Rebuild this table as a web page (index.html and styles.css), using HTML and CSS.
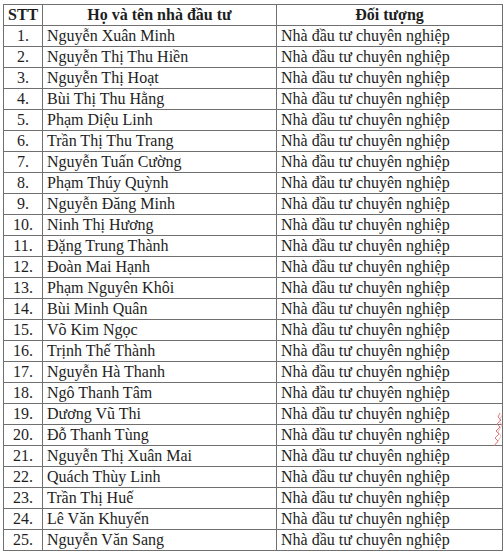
FILE: index.html
```html
<!DOCTYPE html>
<html lang="vi">
<head>
<meta charset="utf-8">
<link rel="stylesheet" href="styles.css">
</head>
<body>
<div class="page">
<table class="list">
<colgroup><col class="c-stt"><col class="c-name"><col class="c-type"></colgroup>
<thead>
<tr><th>STT</th><th>Họ và tên nhà đầu tư</th><th>Đối tượng</th></tr>
</thead>
<tbody>
<tr><td class="stt">1.</td><td>Nguyễn Xuân Minh</td><td>Nhà đầu tư chuyên nghiệp</td></tr>
<tr><td class="stt">2.</td><td>Nguyễn Thị Thu Hiền</td><td>Nhà đầu tư chuyên nghiệp</td></tr>
<tr><td class="stt">3.</td><td>Nguyễn Thị Hoạt</td><td>Nhà đầu tư chuyên nghiệp</td></tr>
<tr><td class="stt">4.</td><td>Bùi Thị Thu Hằng</td><td>Nhà đầu tư chuyên nghiệp</td></tr>
<tr><td class="stt">5.</td><td>Phạm Diệu Linh</td><td>Nhà đầu tư chuyên nghiệp</td></tr>
<tr><td class="stt">6.</td><td>Trần Thị Thu Trang</td><td>Nhà đầu tư chuyên nghiệp</td></tr>
<tr><td class="stt">7.</td><td>Nguyễn Tuấn Cường</td><td>Nhà đầu tư chuyên nghiệp</td></tr>
<tr><td class="stt">8.</td><td>Phạm Thúy Quỳnh</td><td>Nhà đầu tư chuyên nghiệp</td></tr>
<tr><td class="stt">9.</td><td>Nguyễn Đăng Minh</td><td>Nhà đầu tư chuyên nghiệp</td></tr>
<tr><td class="stt">10.</td><td>Ninh Thị Hương</td><td>Nhà đầu tư chuyên nghiệp</td></tr>
<tr><td class="stt">11.</td><td>Đặng Trung Thành</td><td>Nhà đầu tư chuyên nghiệp</td></tr>
<tr><td class="stt">12.</td><td>Đoàn Mai Hạnh</td><td>Nhà đầu tư chuyên nghiệp</td></tr>
<tr><td class="stt">13.</td><td>Phạm Nguyên Khôi</td><td>Nhà đầu tư chuyên nghiệp</td></tr>
<tr><td class="stt">14.</td><td>Bùi Minh Quân</td><td>Nhà đầu tư chuyên nghiệp</td></tr>
<tr><td class="stt">15.</td><td>Võ Kim Ngọc</td><td>Nhà đầu tư chuyên nghiệp</td></tr>
<tr><td class="stt">16.</td><td>Trịnh Thế Thành</td><td>Nhà đầu tư chuyên nghiệp</td></tr>
<tr><td class="stt">17.</td><td>Nguyễn Hà Thanh</td><td>Nhà đầu tư chuyên nghiệp</td></tr>
<tr><td class="stt">18.</td><td>Ngô Thanh Tâm</td><td>Nhà đầu tư chuyên nghiệp</td></tr>
<tr><td class="stt">19.</td><td>Dương Vũ Thi</td><td>Nhà đầu tư chuyên nghiệp</td></tr>
<tr><td class="stt">20.</td><td>Đỗ Thanh Tùng</td><td>Nhà đầu tư chuyên nghiệp</td></tr>
<tr><td class="stt">21.</td><td>Nguyễn Thị Xuân Mai</td><td>Nhà đầu tư chuyên nghiệp</td></tr>
<tr><td class="stt">22.</td><td>Quách Thùy Linh</td><td>Nhà đầu tư chuyên nghiệp</td></tr>
<tr><td class="stt">23.</td><td>Trần Thị Huế</td><td>Nhà đầu tư chuyên nghiệp</td></tr>
<tr><td class="stt">24.</td><td>Lê Văn Khuyến</td><td>Nhà đầu tư chuyên nghiệp</td></tr>
<tr><td class="stt">25.</td><td>Nguyễn Văn Sang</td><td>Nhà đầu tư chuyên nghiệp</td></tr>
</tbody>
</table>
<svg class="stamp" width="10" height="36" viewBox="0 0 10 36" aria-hidden="true">
<path d="M7 1 L5 5 L8 8 L4 12 L7 15 L3 19 L6 22 L2 26 L5 29 L1 34" fill="none" stroke="#e07a7a" stroke-width="1"/>
<path d="M9 3 L6 9 L9 13 L5 20 L8 24 L4 31" fill="none" stroke="#eeaaaa" stroke-width="0.8"/>
</svg>
</div>
</body>
</html>
```

FILE: styles.css
```css
html, body {
  margin: 0;
  padding: 0;
  background: #ffffff;
}
.page {
  position: relative;
  width: 503px;
  height: 552px;
  padding: 4px 0 0 3px;
  box-sizing: border-box;
}
.list {
  border-collapse: collapse;
  table-layout: fixed;
  width: 500px;
  font-family: "Liberation Serif", "Times New Roman", serif;
  font-size: 16px;
  color: #1e1e1e;
  border: 1px solid #6a6a6a;
}
.c-stt { width: 39px; }
.c-name { width: 234px; }
.c-type { width: 226px; }
.list th,
.list td {
  border: 1px solid #707070;
  height: 20px;
  padding: 0 4px;
  line-height: 18px;
  white-space: nowrap;
  vertical-align: middle;
  overflow: hidden;
}
.list th {
  font-weight: bold;
  text-align: center;
}
.list td.stt {
  text-align: center;
  padding: 0;
}
.stamp {
  position: absolute;
  left: 493px;
  top: 412px;
}
```
